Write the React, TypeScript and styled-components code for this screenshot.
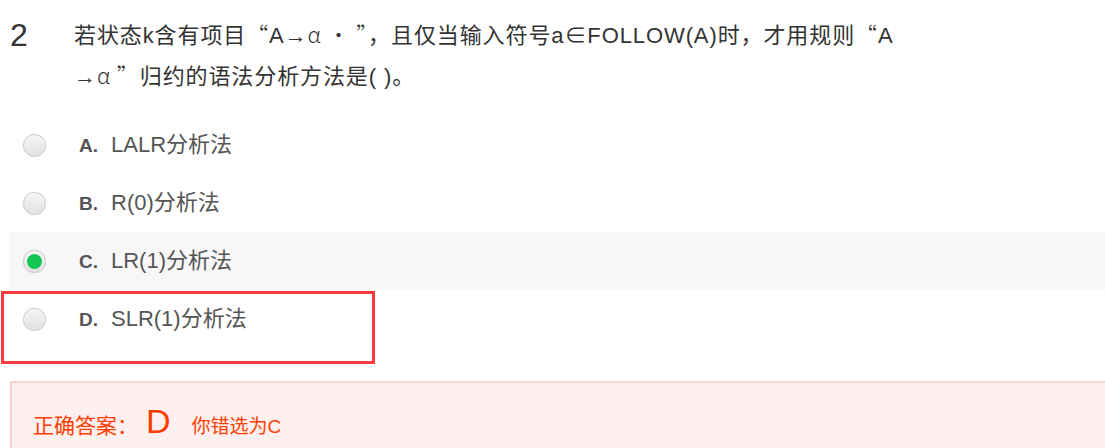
import React from 'react';
import styled, { createGlobalStyle } from 'styled-components';

const GlobalStyle = createGlobalStyle`
    html, body {
        margin: 0;
        padding: 0;
        background: #fff;
    }
    body {
        font-family: Arial, "Liberation Sans", "Noto Sans CJK SC", sans-serif;
    }
`;

const Page = styled.div`
    padding: 15px 0 0 10px;
    overflow: hidden;
`;

const QuestionHead = styled.div`
    display: flex;
    align-items: flex-start;
    height: 82px;
`;

const Number = styled.div`
    width: 64px;
    flex-shrink: 0;
    font-size: 32px;
    line-height: 40px;
    color: #333;
`;

const Stem = styled.div`
    max-width: 960px;
    font-size: 22px;
    line-height: 41px;
    letter-spacing: 0.9px;
    color: #333;
`;

// full-width punctuation and greek come from the CJK face in the original
const Wide = styled.span`
    font-family: "Noto Sans CJK SC", sans-serif;
    font-weight: 300;
    line-height: 1;
`;

const OptionList = styled.div`
    margin-top: 19px;
    display: flex;
    flex-direction: column;
`;

const OptionRow = styled.div<{ $active?: boolean }>`
    position: relative;
    display: flex;
    align-items: center;
    height: 58px;
    padding-left: 13px;
    background: ${(p) => (p.$active ? '#f7f7f7' : 'transparent')};
`;

const Radio = styled.span<{ $checked?: boolean }>`
    position: relative;
    width: 21px;
    height: 21px;
    border-radius: 50%;
    border: 1px solid #c8c8c8;
    background: linear-gradient(#f4f4f4, #e2e2e2);
    box-shadow: inset 0 1px 2px rgba(255, 255, 255, 0.9), 0 0 1px rgba(0, 0, 0, 0.15);
    flex-shrink: 0;

    &::after {
        content: '';
        display: ${(p) => (p.$checked ? 'block' : 'none')};
        position: absolute;
        left: 3px;
        top: 3px;
        width: 15px;
        height: 15px;
        border-radius: 50%;
        background: #13c552;
    }
`;

const Label = styled.div`
    display: flex;
    align-items: baseline;
    margin-left: 33px;
    line-height: 30px;
`;

const Letter = styled.span`
    width: 32px;
    font-size: 19px;
    font-weight: bold;
    color: #555;
`;

const OptionText = styled.span`
    font-size: 22px;
    color: #555;
`;

const Marker = styled.div`
    position: absolute;
    left: -9px;
    top: 1px;
    width: 368px;
    height: 67px;
    border: 3px solid #f23a3a;
    pointer-events: none;
`;

const AnswerBox = styled.div`
    margin-top: 33px;
    height: 100px;
    margin-right: -10px;
    background: #fff0f0;
    border: 2px solid #fad0d0;
    border-right: none;
    padding: 19px 0 0 21px;
    display: flex;
    align-items: baseline;
    color: #ff3d00;
`;

const AnswerLabel = styled.span`
    font-size: 21px;
`;

const AnswerLetter = styled.span`
    font-size: 34px;
    margin-left: 8px;
    margin-right: 21px;
`;

const WrongNote = styled.span`
    font-size: 19px;
`;

const options = [
    { key: 'A', text: 'LALR分析法' },
    { key: 'B', text: 'R(0)分析法' },
    { key: 'C', text: 'LR(1)分析法' },
    { key: 'D', text: 'SLR(1)分析法' },
];

const App = () => {
    const selected = 'C';
    const correct = 'D';

    return (
        <>
            <GlobalStyle />
            <Page>
                <QuestionHead>
                    <Number>2</Number>
                    <Stem>
                        若状态k含有项目<Wide>“</Wide>A→<Wide>α ・ ”</Wide>，且仅当输入符号a∈FOLLOW(A)时，才用规则<Wide>“</Wide>A
                        <br />
                        →<Wide>α ”</Wide>归约的语法分析方法是( )。
                    </Stem>
                </QuestionHead>

                <OptionList>
                    {options.map((o) => (
                        <OptionRow key={o.key} $active={o.key === selected}>
                            <Radio $checked={o.key === selected} />
                            <Label>
                                <Letter>{o.key}.</Letter>
                                <OptionText>{o.text}</OptionText>
                            </Label>
                            {o.key === correct && <Marker />}
                        </OptionRow>
                    ))}
                </OptionList>

                <AnswerBox>
                    <AnswerLabel>正确答案：</AnswerLabel>
                    <AnswerLetter>{correct}</AnswerLetter>
                    <WrongNote>你错选为{selected}</WrongNote>
                </AnswerBox>
            </Page>
        </>
    );
};

export default App;
